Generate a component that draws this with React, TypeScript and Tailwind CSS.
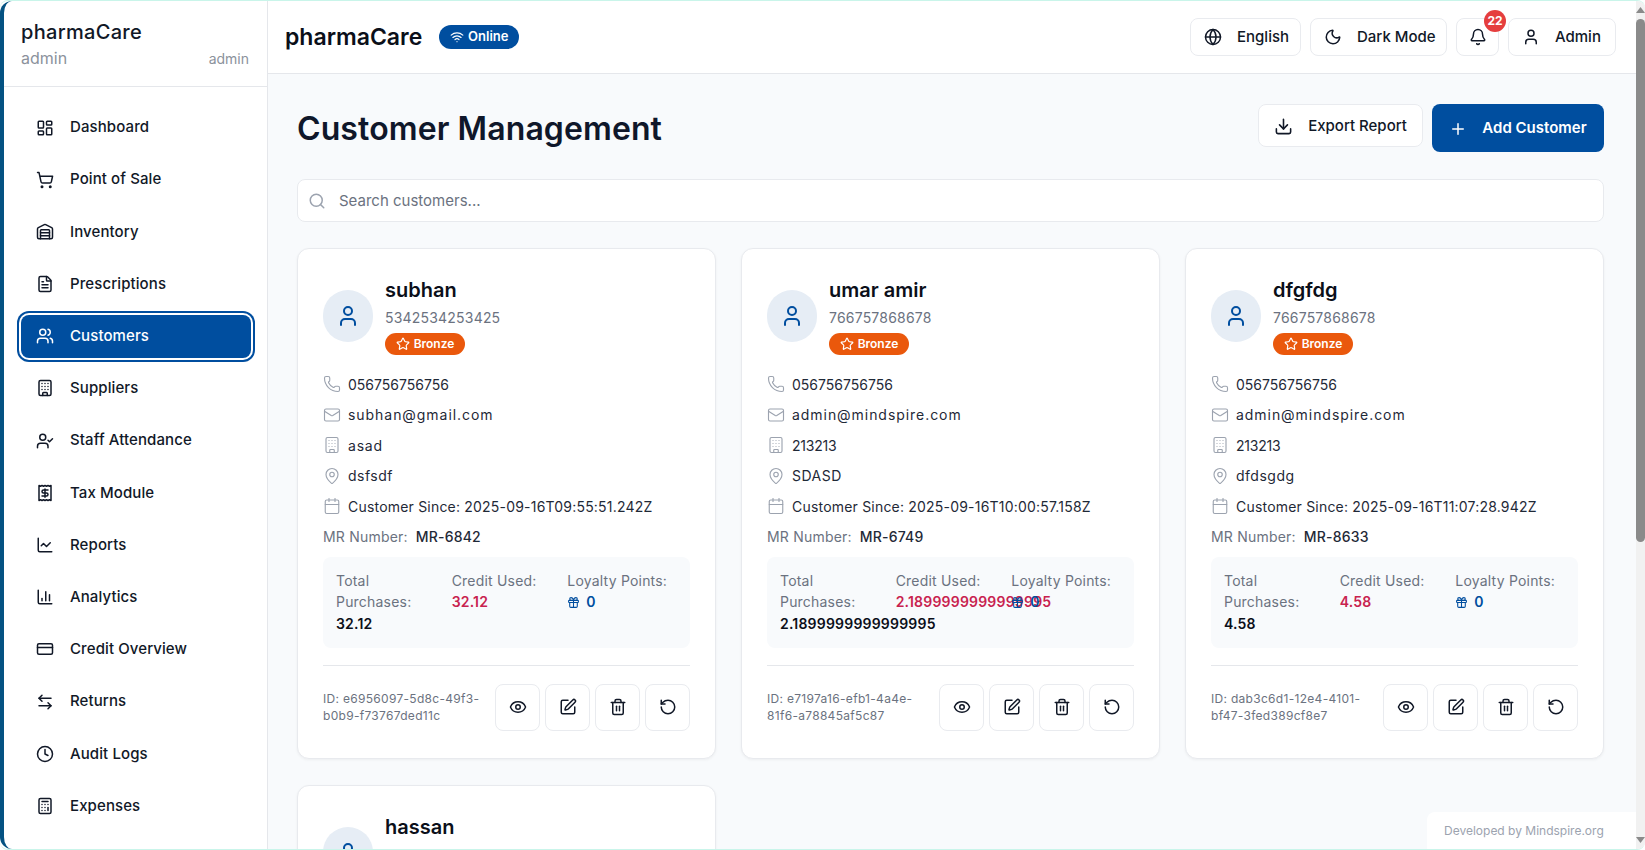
import React from "react";
import {
  LayoutDashboard, ShoppingCart, Warehouse, FileText, Users, Building, UserCheck, Receipt, ChartLine, ChartColumn, CreditCard, ArrowLeftRight, Clock, Calculator,
  Globe, Moon, Bell, User, Download, Plus, Search, Wifi, Phone, Mail, MapPin, Calendar, Gift, Eye, SquarePen, Trash2, RotateCcw, Star,
} from "lucide-react";

const nav = [
  ["Dashboard", LayoutDashboard], ["Point of Sale", ShoppingCart], ["Inventory", Warehouse], ["Prescriptions", FileText],
  ["Customers", Users], ["Suppliers", Building], ["Staff Attendance", UserCheck], ["Tax Module", Receipt], ["Reports", ChartLine],
  ["Analytics", ChartColumn], ["Credit Overview", CreditCard], ["Returns", ArrowLeftRight], ["Audit Logs", Clock], ["Expenses", Calculator],
] as const;

const customers = [
  { name: "subhan", code: "5342534253425", phone: "056756756756", email: "subhan@gmail.com", company: "asad", addr: "dsfsdf", since: "2025-09-16T09:55:51.242Z", mr: "MR-6842", total: "32.12", credit: "32.12", id1: "ID: e6956097-5d8c-49f3-", id2: "b0b9-f73767ded11c" },
  { name: "umar amir", code: "766757868678", phone: "056756756756", email: "admin@mindspire.com", company: "213213", addr: "SDASD", since: "2025-09-16T10:00:57.158Z", mr: "MR-6749", total: "2.1899999999999995", credit: "2.1899999999999995", id1: "ID: e7197a16-efb1-4a4e-", id2: "81f6-a78845af5c87" },
  { name: "dfgfdg", code: "766757868678", phone: "056756756756", email: "admin@mindspire.com", company: "213213", addr: "dfdsgdg", since: "2025-09-16T11:07:28.942Z", mr: "MR-8633", total: "4.58", credit: "4.58", id1: "ID: dab3c6d1-12e4-4101-", id2: "bf47-3fed389cf8e7" },
];

function HeaderButton({ icon: Icon, label, width }: { icon: React.ElementType; label: string; width: string }) {
  return (
    <button className={`flex h-[38px] items-center gap-[15px] rounded-lg border border-[#e9ebef] bg-white pl-[13px] text-[15px] font-medium text-[#111827] ${width}`}>
      <Icon size={18} strokeWidth={2} />
      <span>{label}</span>
    </button>
  );
}

function Row({ icon: Icon, text, track }: { icon: React.ElementType; text: string; track: string }) {
  return (
    <div className={`flex h-[30.5px] items-center gap-[7px] text-[14px] text-[#1f2937] ${track}`}>
      <Icon size={18} strokeWidth={1.5} className="shrink-0 text-[#9ca3af]" />
      <span className="whitespace-nowrap">{text}</span>
    </div>
  );
}

function Action({ icon: Icon }: { icon: React.ElementType }) {
  return (
    <button className="flex h-[47px] w-[45px] items-center justify-center rounded-lg border border-[#e9ebef] bg-white text-[#111827]">
      <Icon size={18} strokeWidth={2} />
    </button>
  );
}

function Head({ name, code }: { name: string; code: string }) {
  return (
    <div className="flex items-center gap-[12px]">
      <div className="flex h-[52px] w-[50px] items-center justify-center rounded-full bg-[#e6edf5] text-[#004e9f]">
        <User size={24} strokeWidth={2} />
      </div>
      <div>
        <div className="text-[20px] leading-[27px] font-semibold text-[#0b0f19]">{name}</div>
        <div className="mt-[3px] text-[14px] leading-[21px] tracking-[0.2px] text-[#6b7280]">{code}</div>
        <div className="mt-[5px] flex h-[22px] w-[80px] items-center justify-center gap-[4px] rounded-full bg-[#ea580c] text-[12px] font-semibold text-white">
          <Star size={14} strokeWidth={2} />
          <span>Bronze</span>
        </div>
      </div>
    </div>
  );
}

function Card({ c }: { c: (typeof customers)[number] }) {
  return (
    <div className="rounded-xl border border-[#e8eaee] bg-white px-[25px] pt-[28px] pb-[27px] shadow-[0_1px_3px_rgba(0,0,0,0.05)]">
      <Head name={c.name} code={c.code} />
      <div className="mt-[14px]">
        <Row icon={Phone} text={c.phone} track="tracking-normal" />
        <Row icon={Mail} text={c.email} track="tracking-[0.95px]" />
        <Row icon={Building} text={c.company} track={/^\d+$/.test(c.company) ? "tracking-[-0.2px]" : "tracking-[0.8px]"} />
        <Row icon={MapPin} text={c.addr} track="tracking-[0.5px]" />
        <Row icon={Calendar} text={`Customer Since: ${c.since}`} track="tracking-[0.2px]" />
      </div>
      <div className="flex h-[30px] items-center gap-[8px] text-[14px] tracking-[0.2px]">
        <span className="text-[#6b7280]">MR Number:</span>
        <span className="font-medium text-[#1f2937]">{c.mr}</span>
      </div>
      <div className="mt-[5px] grid h-[91px] grid-cols-3 gap-x-[6px] rounded-lg bg-[#f8fafc] px-[13px] pt-[13px] text-[14px] leading-[21.7px] tracking-[0.2px]">
        <div>
          <div className="text-[#6b7280]">Total Purchases:</div>
          <div className="font-semibold whitespace-nowrap text-[#0b0f19]">{c.total}</div>
        </div>
        <div>
          <div className="text-[#6b7280]">Credit Used:</div>
          <div className="font-semibold whitespace-nowrap text-[#c8224f]">{c.credit}</div>
        </div>
        <div>
          <div className="whitespace-nowrap text-[#6b7280]">Loyalty Points:</div>
          <div className="flex items-center gap-[6px] font-semibold text-[#004e9f]">
            <Gift size={13} strokeWidth={2} />
            <span>0</span>
          </div>
        </div>
      </div>
      <div className="mt-[17px] flex items-center justify-between border-t border-[#e5e7eb] pt-[18px]">
        <div className="text-[12px] leading-[17.5px] tracking-[0.3px] text-[#6b7280]">
          <div>{c.id1}</div>
          <div>{c.id2}</div>
        </div>
        <div className="flex gap-[5px]">
          <Action icon={Eye} />
          <Action icon={SquarePen} />
          <Action icon={Trash2} />
          <Action icon={RotateCcw} />
        </div>
      </div>
    </div>
  );
}

export default function App() {
  return (
    <div className="flex h-[850px] w-[1645px] overflow-hidden rounded-lg border-y border-[#c9f5ea] bg-white font-['Inter','Liberation_Sans',sans-serif]">
      <aside className="flex w-[268px] shrink-0 flex-col rounded-l-xl border-l-4 border-r border-l-[#045282] border-r-[#e5e7eb] bg-white">
        <div className="h-[86px] shrink-0 border-b border-[#e5e7eb] px-[17px] pt-[17px]">
          <div className="text-[20px] leading-[28px] font-medium tracking-[0.3px] text-[#111827]">pharmaCare</div>
          <div className="flex items-center justify-between pr-[1px] text-[#8b929c]">
            <span className="text-[16px]">admin</span>
            <span className="text-[14px]">admin</span>
          </div>
        </div>
        <nav className="flex flex-col gap-[9.2px] pt-[19px] pr-[16px] pl-[17px]">
          {nav.map(([label, Icon]) => {
            const active = label === "Customers";
            return (
              <div
                key={label}
                className={
                  active
                    ? "flex h-[43px] shrink-0 items-center gap-[16px] rounded-lg bg-[#004e9f] pl-[15px] text-[15px] font-medium tracking-[0.1px] text-white ring-2 ring-[#004e9f] ring-offset-2 ring-offset-white"
                    : "flex h-[43px] shrink-0 items-center gap-[16px] rounded-lg pl-[15px] text-[15px] font-medium tracking-[0.1px] text-[#111827]"
                }
              >
                <Icon size={18} strokeWidth={2} />
                <span>{label}</span>
              </div>
            );
          })}
        </nav>
      </aside>

      <div className="relative flex min-w-0 flex-1 flex-col bg-[#f8fafc]">
        <header className="flex h-[73px] shrink-0 items-center justify-between border-b border-[#e5e7eb] bg-white pr-[20px] pl-[17px]">
          <div className="flex items-center gap-[17px]">
            <span className="text-[23px] font-semibold text-[#0b0f19]">pharmaCare</span>
            <span className="flex h-[24px] w-[80px] items-center justify-center gap-[4px] rounded-full bg-[#004e9f] text-[13px] font-semibold text-white">
              <Wifi size={14} strokeWidth={2} />
              Online
            </span>
          </div>
          <div className="flex items-center gap-[9px]">
            <HeaderButton icon={Globe} label="English" width="w-[111px]" />
            <HeaderButton icon={Moon} label="Dark Mode" width="w-[137px]" />
            <button className="relative flex h-[38px] w-[43px] items-center justify-center rounded-lg border border-[#e9ebef] bg-white text-[#111827]">
              <Bell size={18} strokeWidth={2} />
              <span className="absolute -top-[9px] -right-[8px] flex h-[22px] w-[22px] items-center justify-center rounded-full bg-[#e53e3e] text-[12px] font-bold text-white">22</span>
            </button>
            <HeaderButton icon={User} label="Admin" width="w-[108px]" />
          </div>
        </header>
        <main className="min-h-0 flex-1 overflow-hidden pt-[30px] pr-[32px] pl-[29px]">
          <div className="flex items-start justify-between">
            <h1 className="text-[32px] leading-[50px] font-semibold tracking-[0.1px] text-[#0f172a]">Customer Management</h1>
            <div className="flex items-start gap-[9px]">
              <button className="flex h-[43px] w-[165px] items-center justify-center gap-[15px] rounded-lg border border-[#e9ebef] bg-white pt-[2px] text-[15px] font-medium text-[#111827]">
                <Download size={19} strokeWidth={2} />
                Export Report
              </button>
              <button className="flex h-[48px] w-[172px] items-center justify-center gap-[15px] rounded-lg bg-[#004e9f] pt-[1px] text-[15px] font-semibold text-white">
                <Plus size={18} strokeWidth={2} />
                Add Customer
              </button>
            </div>
          </div>
          <div className="mt-[25px] flex h-[43px] items-center gap-[13px] rounded-lg border border-[#e8eaee] bg-white pt-[1px] pl-[10px] text-[15px] text-[#6b7280]">
            <Search size={18} strokeWidth={2} className="text-[#9ca3af]" />
            <span>Search customers...</span>
          </div>
          <div className="mt-[26px] grid grid-cols-3 gap-x-[25px] gap-y-[26px]">
            {customers.map((c) => (
              <Card key={c.name} c={c} />
            ))}
            <div className="rounded-xl border border-[#e8eaee] bg-white px-[25px] pt-[28px] pb-[27px] shadow-[0_1px_3px_rgba(0,0,0,0.05)]">
              <Head name="hassan" code="0340340340340" />
            </div>
          </div>
        </main>
        <div className="absolute right-0 bottom-0 flex h-[37px] w-[209px] items-center rounded-tl-lg bg-white pl-[17px] text-[12px] text-[#9ca3af]">
          Developed by Mindspire.org
        </div>
      </div>

      <div className="flex w-[9px] shrink-0 flex-col bg-[#f1f1f1]">
        <div className="flex h-[18px] shrink-0 items-center justify-center">
          <svg width="9" height="6" viewBox="0 0 9 6"><path d="M4.5 0 9 6H0Z" fill="#8a8a8a" /></svg>
        </div>
        <div className="h-[523px] rounded-full bg-[#8a8a8a]" />
        <div className="mt-auto flex h-[18px] shrink-0 items-center justify-center">
          <svg width="9" height="6" viewBox="0 0 9 6"><path d="M0 0H9L4.5 6Z" fill="#8a8a8a" /></svg>
        </div>
      </div>
    </div>
  );
}
